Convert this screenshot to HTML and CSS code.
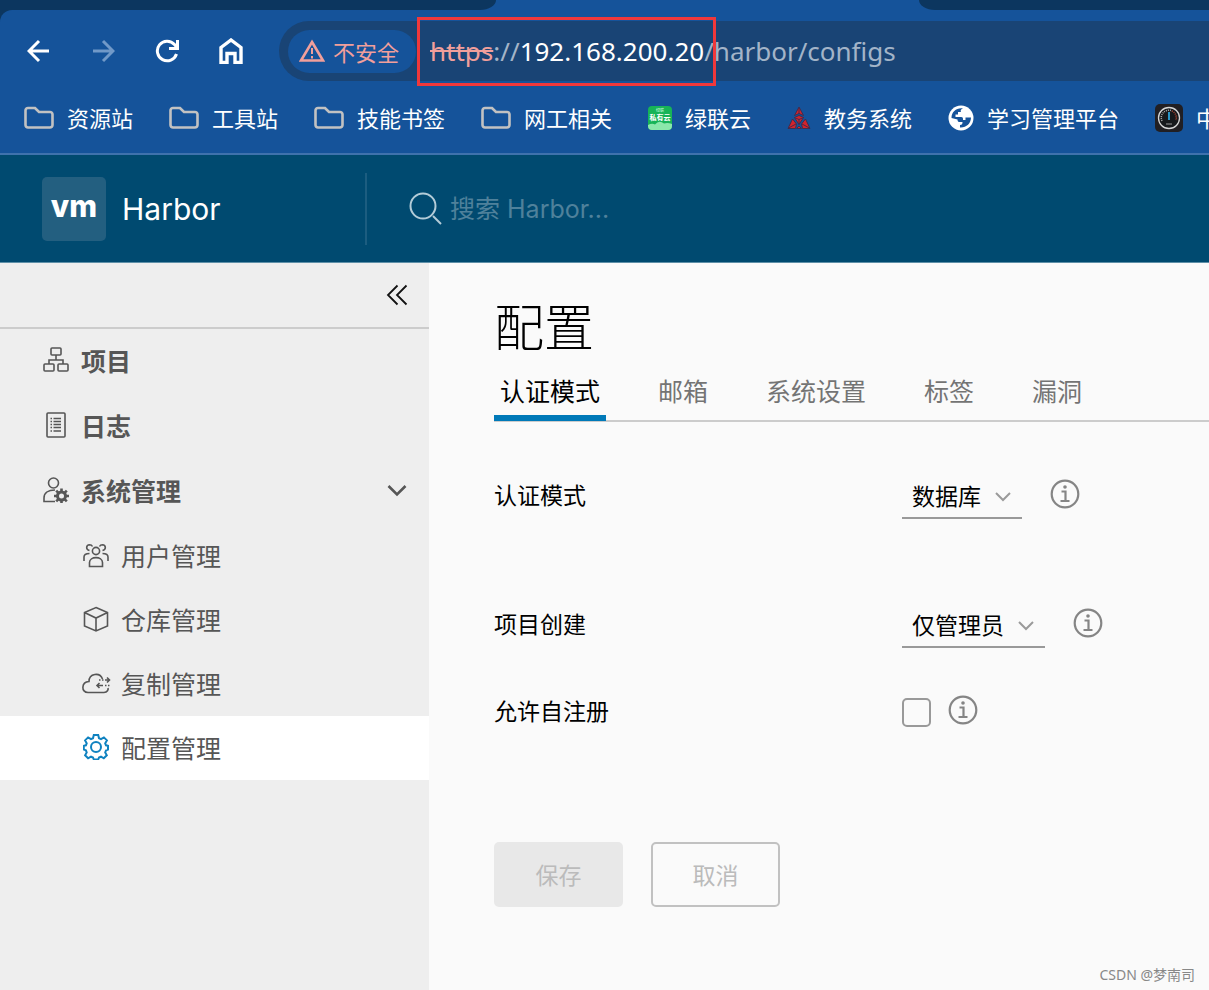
FILE: index.html
```html
<!DOCTYPE html>
<html lang="zh-CN">
<head>
<meta charset="utf-8">
<title>Harbor</title>
<link rel="stylesheet" href="styles.css">
</head>
<body>
<div class="browser">
  <div class="tabstrip">
    <div class="tabstrip-left"></div>
    <div class="tabstrip-active"></div>
    <div class="tabstrip-right"></div>
  </div>
  <div class="chrome">
    <div class="toolbar">
      <button class="tool" type="button" aria-label="后退"><svg viewBox="0 0 24 24"><path d="M22 12H3M12 2 2 12l10 10"/></svg></button>
      <button class="tool tool-off" type="button" aria-label="前进"><svg viewBox="0 0 24 24"><path d="M2 12h19M12 2l10 10-10 10"/></svg></button>
      <button class="tool" type="button" aria-label="刷新"><svg viewBox="0 0 24 24"><path d="M21.500 15A9.800 9.800 0 1 1 19.500 5.500L22 8.500M22.500 1v8.500H14"/></svg></button>
      <button class="tool" type="button" aria-label="主页"><svg class="home" viewBox="0 0 24 26"><path d="M2 9.500 12 2l10 7.500V24.500h-6v-9H8v9H2z"/></svg></button>
      <div class="omnibox">
        <button class="security" type="button">
          <svg viewBox="0 0 26 24"><path d="M13 3 24 21.500H2z"/><path class="dash" d="M13 9v6M13 17v2.500"/></svg>
          <span>不安全</span>
        </button>
        <div class="url"><span class="url-marked"><s>https</s>://<b>192.168.200.20</b>/</span>harbor/configs</div>
      </div>
    </div>
    <nav class="bookmarks">
      <a href="#"><svg class="folder" viewBox="0 0 30 24"><path d="M4 2h7l4 4h11a2.500 2.500 0 0 1 2.500 2.500V19a2.500 2.500 0 0 1-2.500 2.500H4A2.500 2.500 0 0 1 1.500 19V4.500A2.500 2.500 0 0 1 4 2z"/></svg>资源站</a>
      <a href="#"><svg class="folder" viewBox="0 0 30 24"><path d="M4 2h7l4 4h11a2.500 2.500 0 0 1 2.500 2.500V19a2.500 2.500 0 0 1-2.500 2.500H4A2.500 2.500 0 0 1 1.500 19V4.500A2.500 2.500 0 0 1 4 2z"/></svg>工具站</a>
      <a href="#"><svg class="folder" viewBox="0 0 30 24"><path d="M4 2h7l4 4h11a2.500 2.500 0 0 1 2.500 2.500V19a2.500 2.500 0 0 1-2.500 2.500H4A2.500 2.500 0 0 1 1.500 19V4.500A2.500 2.500 0 0 1 4 2z"/></svg>技能书签</a>
      <a href="#"><svg class="folder" viewBox="0 0 30 24"><path d="M4 2h7l4 4h11a2.500 2.500 0 0 1 2.500 2.500V19a2.500 2.500 0 0 1-2.500 2.500H4A2.500 2.500 0 0 1 1.500 19V4.500A2.500 2.500 0 0 1 4 2z"/></svg>网工相关</a>
      <a href="#"><svg class="site" viewBox="0 0 24 24"><rect width="24" height="24" rx="4" fill="#17b457"/><path d="M0 19q4-2 7-.5 4-5 9-1 4-1 8 .5v2a4 4 0 0 1-4 4H4a4 4 0 0 1-4-4z" fill="#8be8ab"/><text x="12" y="14" text-anchor="middle" font-size="7" font-weight="700" fill="#fff">私有云</text><text x="12" y="6" text-anchor="middle" font-size="4" fill="#d6ffe4">绿联</text></svg>绿联云</a>
      <a href="#"><svg class="site" viewBox="0 0 24 24"><g fill="#d4232b" stroke="#3b2b4c" stroke-width=".9"><path d="M12 1 16.500 9.500 12 7.500 7.500 9.500z"/><path d="M12 2v5.500"/><path d="M5.500 13 9.500 18 8.500 22.500H1z"/><path d="M1.500 22 9 18"/><path d="M18.500 13 14.500 18l1 4.500H23z"/><path d="M22.500 22 15 18"/><path d="M7.500 11.500 12 9.500l4.500 2L12 18.500z"/><path d="M7.500 11.500 12 13.500l4.500-2M12 13.500v5M9.500 22.500 12 20l2.500 2.500z"/></g></svg>教务系统</a>
      <a href="#"><svg class="site globe" viewBox="0 0 26 26"><circle cx="13" cy="13" r="12.500" fill="#fff"/><path d="M15 3.500c-2 .5-3 2-2 3.500h-3v2.500H7.500V12H13c2 0 2 1 2 3h2.500v-2.500h5.500c0 6-5 10.500-11 10V20c2 0 2.500-1 2.500-3h-3.500c-1 0-1.500-1-1.500-2.500L3.500 13C3.500 6.500 9 2.500 15 3.500z" fill="#15539a"/></svg>学习管理平台</a>
      <a href="#"><svg class="site gauge" viewBox="0 0 28 28"><rect width="28" height="28" rx="5" fill="#211f23"/><circle cx="14" cy="14" r="10.500" fill="#17191c" stroke="#d5d5d5" stroke-width="1.300"/><path d="M7 17a7.500 7.500 0 0 1 10-10" fill="none" stroke="#aaa" stroke-width="1.500" stroke-dasharray="1 1"/><path d="M17 7a7.500 7.500 0 0 1 4 9" fill="none" stroke="#b34632" stroke-width="1.500" stroke-dasharray="1 1"/><path d="M14 8v8" stroke="#2ba4dc" stroke-width="1.800"/><path d="M11 20h6" stroke="#999"/></svg>中</a>
    </nav>
  </div>
</div>

<header class="header">
  <a class="brand" href="#"><span class="logo">vm</span><span class="brand-name">Harbor</span></a>
  <label class="search">
    <svg viewBox="0 0 34 34"><circle cx="14" cy="14" r="12.500"/><path d="m24 24 8 8"/></svg>
    <input type="search" placeholder="搜索 Harbor..." aria-label="搜索 Harbor">
  </label>
</header>

<div class="layout">
  <aside class="sidebar">
    <div class="collapse">
      <button type="button" aria-label="收起"><svg viewBox="0 0 22 22"><path d="M11.500 1.500 2 11l9.500 9.500M20.500 1.500 11 11l9.500 9.500"/></svg></button>
    </div>
    <nav class="menu">
      <a class="item" href="#"><svg viewBox="0 0 26 26"><rect x="8" y="1" width="10" height="7" rx="1"/><rect x="1" y="17" width="10" height="7" rx="1"/><rect x="15" y="17" width="10" height="7" rx="1"/><path d="M13 8v5M6 17v-4h14v4"/></svg>项目</a>
      <a class="item" href="#"><svg viewBox="0 0 26 26"><rect x="4" y="1" width="18" height="24" rx="1"/><path d="M10.500 6.500H18M10.500 9.500H18M10.500 12.500H18M10.500 15.500H18M10.500 19H18M7.500 6.500H9M7.500 9.500H9M7.500 12.500H9M7.500 15.500H9M7.500 19H9"/></svg>日志</a>
      <button class="item" type="button"><svg viewBox="0 0 26 26"><circle cx="10.500" cy="6" r="5"/><path d="M12 13c-7 0-11 3-11 8v3.500h11"/><circle cx="18.500" cy="19" r="4" stroke-width="3"/><path stroke-width="2.600" d="M18.500 11.500v3M18.500 23.500v3M11 19h3M23 19h3M13.200 13.700l2 2M21.800 22.300l2 2M13.200 24.300l2-2M21.800 15.700l2-2"/></svg>系统管理
        <svg class="arrow" viewBox="0 0 20 13"><path d="m1.500 2 8.500 8.500L18.500 2"/></svg></button>
      <a class="item sub" href="#"><svg viewBox="0 0 26 26"><circle cx="13" cy="9" r="3.600"/><path d="M6.500 24.500v-4c0-6.500 13-6.500 13 0v4zM1 19v-4c0-2 2-3.500 5.500-3.500M25 19v-4c0-2-2-3.500-5.500-3.500M6.500 8.500C2.500 7.500 3 3 6.500 2.800c1.500 0 2.500.7 3 1.700M19.500 8.500c4-1 3.500-5.500 0-5.700-1.500 0-2.500.7-3 1.700"/></svg>用户管理</a>
      <a class="item sub" href="#"><svg viewBox="0 0 26 26"><path d="M13 1.500 24.500 6.500v13.500L13 25 1.500 20V6.500zM1.500 6.500 13 12l11.500-5.500M13 12v13"/></svg>仓库管理</a>
      <a class="item sub" href="#"><svg class="cloud" viewBox="0 0 30 26"><path d="M21.500 9C19 2 8 3 8 11.500 0 12 0 22.500 7 22.500h16c3.500 0 4.500-3 4-4.500"/><path d="M26 7.500 28.500 10 26 12.500M18 10h1.500M21 10h1.500M24 10h4M18.500 13 16 15.500l2.500 2.500M16 15.500h6M24 15.500h1.500M27 15.500h1.500"/></svg>复制管理</a>
      <a class="item sub current" href="#"><svg viewBox="0 0 26 26"><circle cx="13" cy="13" r="5"/><path d="M10.800 1h4.400l.8 3.300 2 .8 2.900-1.700 3 3-1.700 2.900.8 2 2 .5v3.800l-2 .8-.8 2 1.600 2.900-3 3-2.800-1.600-2 .8-.8 2h-4.400L10 23.500l-2-.8-2.900 1.600-3-3 1.600-2.900-.8-2L.8 15.600v-3.800l2.100-.5.8-2L2.100 6.400l3-3L8 5.100l2-.8z"/></svg>配置管理</a>
    </nav>
  </aside>

  <main class="content">
    <h1>配置</h1>
    <nav class="tabs">
      <a class="active" href="#">认证模式</a>
      <a href="#">邮箱</a>
      <a href="#">系统设置</a>
      <a href="#">标签</a>
      <a href="#">漏洞</a>
    </nav>
    <form>
      <div class="row row-mode">
        <label class="name" for="mode">认证模式</label>
        <span class="select"><select id="mode"><option>数据库</option></select><svg viewBox="0 0 16 10"><path d="m1 1 7 7 7-7"/></svg></span>
        <button class="info" type="button" aria-label="认证模式说明"><svg viewBox="0 0 30 30"><circle cx="15" cy="15" r="13.300"/><path d="M11.500 12.500h4v9.500M10.500 22h9"/><circle class="dot" cx="15" cy="8" r="1.800"/></svg></button>
      </div>
      <div class="row row-create">
        <label class="name" for="create">项目创建</label>
        <span class="select"><select id="create"><option>仅管理员</option></select><svg viewBox="0 0 16 10"><path d="m1 1 7 7 7-7"/></svg></span>
        <button class="info" type="button" aria-label="项目创建说明"><svg viewBox="0 0 30 30"><circle cx="15" cy="15" r="13.300"/><path d="M11.500 12.500h4v9.500M10.500 22h9"/><circle class="dot" cx="15" cy="8" r="1.800"/></svg></button>
      </div>
      <div class="row row-register">
        <label class="name" for="register">允许自注册</label>
        <input id="register" type="checkbox">
        <button class="info" type="button" aria-label="允许自注册说明"><svg viewBox="0 0 30 30"><circle cx="15" cy="15" r="13.300"/><path d="M11.500 12.500h4v9.500M10.500 22h9"/><circle class="dot" cx="15" cy="8" r="1.800"/></svg></button>
      </div>
      <div class="actions">
        <button class="save" type="submit" disabled>保存</button>
        <button class="cancel" type="button" disabled>取消</button>
      </div>
    </form>
  </main>
</div>
<div class="watermark">CSDN @梦南司</div>
</body>
</html>
```

FILE: styles.css
```css
* { box-sizing: border-box; }

body {
  margin: 0;
  min-height: 100vh;
  display: flex;
  flex-direction: column;
  position: relative;
  overflow-x: hidden;
  background: #fafafa;
  color: #000;
  font-family: "Noto Sans", "Noto Sans CJK SC", sans-serif;
}

a { color: inherit; text-decoration: none; }
button { border: 0; padding: 0; background: none; color: inherit; font: inherit; }
svg { flex: none; fill: none; stroke: currentColor; }
svg text { stroke: none; font-family: "Noto Sans CJK SC", sans-serif; }

/* Browser frame */
.browser { background: #0c365f; overflow: hidden; }
.tabstrip { display: flex; height: 10px; background: #15539a; }
.tabstrip-left { flex: 0 0 41%; background: #0c365f; border-bottom-right-radius: 16px 10px; }
.tabstrip-active { flex: 1; }
.tabstrip-right { flex: 0 0 24%; background: #0c365f; border-bottom-left-radius: 16px 10px; }
.chrome {
  background: #15539a;
  border-top-left-radius: 12px;
  border-bottom: 2px solid #3f72ad;
  color: #fff;
}
.toolbar { display: flex; align-items: center; padding: 11px 0 0 27px; }
.tool { width: 24px; height: 26px; margin-right: 40px; display: flex; align-items: center; flex: none; }
.tool svg { width: 24px; height: 24px; stroke-width: 3; }
.tool .home { height: 26px; stroke-width: 3.4; }
.tool-off { color: #7199c8; }
.omnibox {
  flex: 1;
  display: flex;
  align-items: center;
  height: 60px;
  margin-left: -4px;
  padding-left: 9px;
  background: #194475;
  border-radius: 30px 0 0 30px;
}
.security {
  display: flex;
  align-items: center;
  gap: 8px;
  height: 43px;
  padding: 0 17px 0 11px;
  border-radius: 22px;
  background: #15539a;
  color: #f19f9b;
  font-size: 22px;
  white-space: nowrap;
}
.security svg { width: 26px; height: 24px; stroke-width: 2.6; }
.security .dash { stroke-width: 2; }
.url { margin-left: 14px; padding-bottom: 1px; font-size: 26px; line-height: 40px; color: #a3b4c8; white-space: nowrap; font-family: "Noto Sans", sans-serif; }
.url s { color: #f19f9b; }
.url b { color: #fff; font-weight: 400; }
.url-marked { position: relative; }
.url-marked::after {
  content: "";
  position: absolute;
  inset: -16px -2px -17px -13px;
  border: 3px solid #f0383b;
}

.bookmarks { display: flex; align-items: center; gap: 36px; height: 72px; padding: 2px 0 0 24px; white-space: nowrap; }
.bookmarks a { display: flex; align-items: center; gap: 13px; font-size: 22px; line-height: 32px; }
.folder { width: 30px; height: 24px; color: #c2c2c2; stroke-width: 2.6; }
.site { width: 24px; height: 24px; stroke: none; }
.globe { width: 26px; height: 26px; }
.gauge { width: 28px; height: 28px; }

/* Application header */
.header { display: flex; align-items: center; height: 108px; background: #004a70; border-bottom: 1px solid #5f90a8; }
.brand {
  display: flex;
  align-items: center;
  gap: 16px;
  width: 367px;
  height: 72px;
  padding-left: 42px;
  border-right: 2px solid #1c5d80;
  color: #fff;
}
.logo {
  width: 64px;
  height: 64px;
  border-radius: 5px;
  background: #235f80;
  font: 800 30px/58px Inter, sans-serif;
  text-align: center;
}
.brand-name { font: 400 30px/40px Inter, sans-serif; }
.search { flex: 1; display: flex; align-items: center; gap: 7px; padding-left: 42px; color: #b3ccd8; }
.search svg { width: 34px; height: 34px; stroke-width: 2; }
.search input {
  flex: 1;
  min-width: 0;
  border: 0;
  padding: 1px 0 0;
  outline: 0;
  background: none;
  color: #fff;
  font: 25px/36px Inter, "Noto Sans CJK SC", sans-serif;
}
.search input::placeholder { color: #4f819b; opacity: 1; }

/* Sidebar */
.layout { flex: 1; display: flex; }
.sidebar { flex: 0 0 429px; background: #eee; color: #565656; }
.collapse { display: flex; justify-content: flex-end; align-items: center; height: 66px; padding-right: 21px; border-bottom: 2px solid #ccc; color: #111; }
.collapse button { display: flex; }
.collapse svg { width: 22px; height: 22px; stroke-width: 1.8; }
.menu { display: flex; flex-direction: column; }
.item {
  display: flex;
  align-items: center;
  gap: 12px;
  height: 64px;
  padding: 0 22px 2px 43px;
  font-family: "Noto Sans CJK SC", sans-serif;
  font-size: 25px;
  font-weight: 700;
  text-align: left;
}
.item:not(.sub) { margin-bottom: 1px; }
.item svg { width: 26px; height: 26px; stroke-width: 1.6; }
.item .arrow { width: 20px; height: 13px; margin-left: auto; stroke-width: 2.6; }
.item.sub { padding-left: 83px; font-weight: 400; }
.item .cloud { width: 30px; margin: 0 -2px; }
.current { background: #fff; }
.item.current svg { color: #0f82c0; stroke-width: 2; }

/* Configuration page */
.content { flex: 1; min-width: 0; padding: 31px 0 84px 65px; overflow: hidden; }
h1 { margin: 0; font-size: 50px; line-height: 60px; font-weight: 300; font-family: "Noto Sans CJK SC", sans-serif; }
.tabs { display: flex; gap: 46px; margin-top: 9px; border-bottom: 2px solid #ccc; color: #747474; white-space: nowrap; }
.tabs a { padding: 9px 6px 0; height: 58px; font-size: 25px; line-height: 38px; margin-bottom: -1px; }
.tabs .active { border-bottom: 6px solid #0079b8; color: #000; }
.row { display: flex; align-items: center; font-size: 23px; }
.row-mode { margin-top: 52px; }
.row-create { margin-top: 84px; }
.row-register { margin-top: 42px; }
.name { flex: 0 0 408px; padding-bottom: 3px; line-height: 42px; }
.select { position: relative; display: flex; }
.select select {
  appearance: none;
  height: 45px;
  padding: 0 41px 0 10px;
  border: 0;
  border-bottom: 2px solid #999;
  border-radius: 0;
  background: none;
  color: #000;
  font: inherit;
}
.select svg { position: absolute; right: 11px; top: 18px; width: 16px; height: 10px; color: #9a9a9a; stroke-width: 2; pointer-events: none; }
.info { display: flex; margin-left: 28px; padding-bottom: 5px; color: #858585; }
.info svg { width: 30px; height: 30px; stroke-width: 2.2; }
.info .dot { fill: currentColor; stroke: none; }
.row input { appearance: none; width: 29px; height: 29px; margin: 0; border: 2px solid #999; border-radius: 5px; }
.row input + .info { margin-left: 17px; }
.actions { display: flex; gap: 28px; margin-top: 107px; }
.actions button { width: 129px; height: 65px; padding-bottom: 2px; border-radius: 5px; font-size: 23px; color: #bbb; }
.actions .save { background: #e8e8e8; }
.actions .cancel { border: 2px solid #c1c1c1; }

.watermark { position: absolute; right: 14px; bottom: 6px; font-size: 14px; line-height: 20px; color: #888; }
```
